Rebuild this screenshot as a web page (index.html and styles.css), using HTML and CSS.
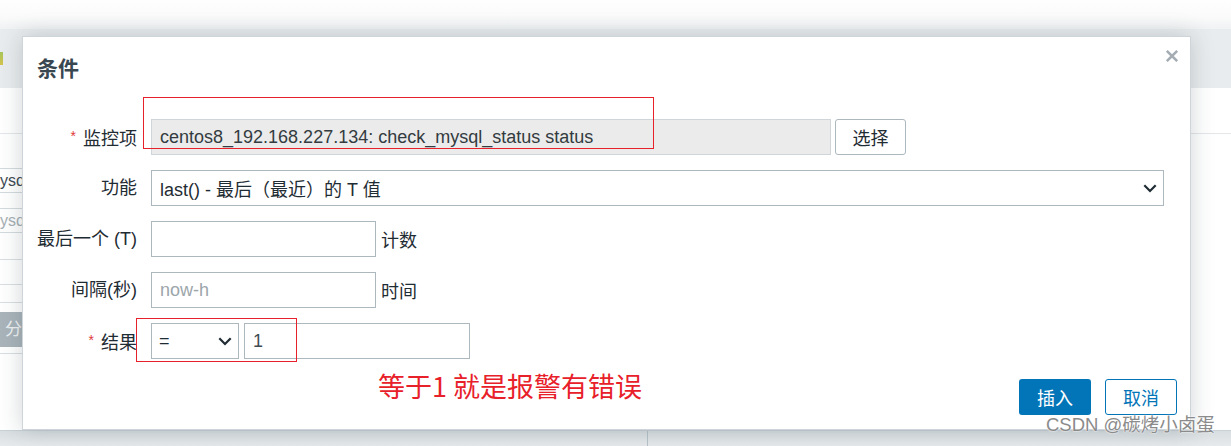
FILE: index.html
```html
<!DOCTYPE html>
<html lang="zh">
<head>
<meta charset="utf-8">
<title>条件</title>
<link rel="stylesheet" href="styles.css">
</head>
<body>
<div class="page">
  <div class="bg-top"></div>
  <div class="bg-header"><span class="bg-icon"></span></div>
  <div class="bg-body">
    <div class="bg-row"></div>
    <div class="bg-left">
      <div class="bg-field">ysq</div>
      <div class="bg-field bg-muted">ysq</div>
      <div class="bg-rule bg-rule-a"></div>
      <div class="bg-rule bg-rule-b"></div>
      <div class="bg-rule bg-rule-c"></div>
      <div class="bg-chip">分</div>
      <div class="bg-rule bg-rule-d"></div>
    </div>
  </div>
  <div class="bg-footer"><span class="bg-divider"></span></div>
</div>

<div class="dialog">
  <div class="dialog-head">
    <h2 class="dialog-title">条件</h2>
    <span class="close" aria-label="关闭">
      <svg width="14" height="14" viewBox="0 0 14 14"><path d="M1.8 1.8 L12.2 12.2 M12.2 1.8 L1.8 12.2" stroke="#a3adb3" stroke-width="2.6" fill="none"/></svg>
    </span>
  </div>
  <div class="form">
    <div class="label"><span class="req">*</span>监控项</div>
    <div class="field">
      <div class="input disabled w-item">centos8_192.168.227.134: check_mysql_status status</div>
      <span class="btn-select">选择</span>
    </div>

    <div class="label">功能</div>
    <div class="field">
      <div class="input select w-func">
        <span>last() - 最后（最近）的 T 值</span>
        <svg class="chev" width="14" height="9" viewBox="0 0 14 9"><path d="M1.3 1.3 L7 7 L12.7 1.3" stroke="#1f2c33" stroke-width="2.2" fill="none"/></svg>
      </div>
    </div>

    <div class="label">最后一个 (T)</div>
    <div class="field">
      <div class="input w-small"></div>
      <span class="suffix">计数</span>
    </div>

    <div class="label">间隔(秒)</div>
    <div class="field">
      <div class="input w-small placeholder">now-h</div>
      <span class="suffix">时间</span>
    </div>

    <div class="label"><span class="req">*</span>结果</div>
    <div class="field">
      <div class="input select w-op">
        <span>=</span>
        <svg class="chev" width="14" height="9" viewBox="0 0 14 9"><path d="M1.3 1.3 L7 7 L12.7 1.3" stroke="#1f2c33" stroke-width="2.2" fill="none"/></svg>
      </div>
      <div class="input w-value value">1</div>
    </div>
  </div>
  <div class="dialog-foot">
    <p class="note">等于1 就是报警有错误</p>
    <div class="actions">
      <span class="btn primary">插入</span>
      <span class="btn outline">取消</span>
    </div>
  </div>
</div>

<div class="mark mark-item"></div>
<div class="mark mark-result"></div>
<div class="watermark">CSDN @碳烤小卤蛋</div>
</body>
</html>
```

FILE: styles.css
```css
* { box-sizing: border-box; margin: 0; padding: 0; }
html, body { width: 1231px; height: 446px; overflow: hidden; }
body {
  position: relative;
  background: #fff;
  font-family: "Liberation Sans", "Noto Sans CJK SC", sans-serif;
  font-size: 18px;
  color: #1f2c33;
}

/* background page */
.page { display: flex; flex-direction: column; height: 446px; }
.bg-top { height: 29px; background: linear-gradient(#fefefe 0, #fbfbfb 55%, #f0f2f3 100%); }
.bg-header { height: 59px; background: #e9ecee; padding-top: 23px; }
.bg-icon { display: block; width: 3px; height: 13px; background: linear-gradient(#a7c75b, #d6c24e); }
.bg-body { flex: 1; display: flex; flex-direction: column; }
.bg-row { height: 46px; border-bottom: 1px solid #e3e7ea; }
.bg-left { width: 22px; display: flex; flex-direction: column; }
.bg-field {
  height: 25px; margin-top: 34px;
  border-top: 1px solid #d4dbdf; border-bottom: 1px solid #d4dbdf;
  white-space: nowrap; font-size: 16px;
  line-height: 23px; color: #3c4a52;
}
.bg-field.bg-muted { margin-top: 15px; color: #a7b0b5; }
.bg-rule { height: 1px; background: #d9dfe2; }
.bg-rule-a { margin-top: 26px; }
.bg-rule-b { margin-top: 24px; }
.bg-rule-c { margin-top: 17px; }
.bg-chip {
  height: 35px; margin-top: 9px; background: #a9b4ba; color: #eef1f2;
  white-space: nowrap; line-height: 35px; font-size: 17px; text-align: right;
}
.bg-rule-d { margin-top: 6px; }
.bg-footer {
  height: 16px; background: linear-gradient(#d8dee1, #e7eaec);
  border-top: 1px solid #c8d1d6; display: flex; padding-left: 647px;
}
.bg-divider { width: 1px; background: #b7c3c9; }

/* dialog */
.dialog {
  position: absolute; left: 22px; top: 36px;
  width: 1169px; height: 394px;
  background: #fff;
  border: 1px solid #cdd5da;
  box-shadow: 0 0 22px rgba(40, 60, 70, 0.22);
  display: flex; flex-direction: column;
}
.dialog-head { position: relative; padding: 20px 14px 0 14px; }
.dialog-title { font-size: 21px; line-height: 24px; font-weight: bold; color: #384750; }
.close { position: absolute; right: 11px; top: 12px; width: 14px; height: 14px; display: block; }
.close svg { display: block; }

.form {
  margin-top: 38px;
  display: grid;
  grid-template-columns: 114px 1fr;
  grid-auto-rows: 36px;
  column-gap: 14px;
  row-gap: 15px;
  align-items: center;
}
.label { text-align: right; white-space: nowrap; color: #1f2c33; line-height: 22px; }
.req { color: #e0393a; font-size: 14px; vertical-align: 4px; margin-right: 7px; }
.field { display: flex; align-items: center; height: 36px; }
.input {
  height: 36px;
  border: 1px solid #acb7be;
  background: #fff;
  padding: 0 8px;
  display: flex; align-items: center;
  white-space: nowrap; overflow: hidden;
  color: #1f2c33;
}
.input.disabled { background: #ebebeb; border-color: #cfd5d9; color: #333b40; }
.input.select { justify-content: space-between; padding-right: 6px; }
.chev { display: block; flex: none; }
.w-item { width: 680px; }
.w-func { width: 1013px; }
.w-small { width: 225px; }
.w-op { width: 88px; padding-left: 7px; }
.w-value { width: 226px; margin-left: 5px; }
.placeholder { color: #9ca6ab; }
.value { color: #3f4b52; }
.suffix { margin-left: 5px; color: #1f2c33; }
.btn-select {
  margin-left: 4px; width: 71px; height: 36px;
  border: 1px solid #acb7be; border-radius: 3px; background: #fff;
  display: flex; align-items: center; justify-content: center; color: #1f2c33;
}

.dialog-foot {
  margin-top: 11px;
  display: flex; justify-content: space-between; align-items: flex-start;
  padding-right: 13px;
}
.note {
  margin-left: 355px;
  font-family: "Noto Sans CJK SC", sans-serif;
  font-size: 27px; line-height: 32px;
  color: #e8202a;
}
.actions { display: flex; gap: 14px; margin-top: 9px; }
.btn {
  width: 72px; height: 36px; border-radius: 3px;
  display: flex; align-items: center; justify-content: center;
}
.btn.primary { background: #0275b8; color: #fff; }
.btn.outline { border: 1px solid #0275b8; color: #0275b8; background: #fff; }

/* annotations */
.mark { position: absolute; border: 1px solid #e8202a; }
.mark-item { left: 143px; top: 97px; width: 511px; height: 52px; }
.mark-result { left: 136px; top: 318px; width: 161px; height: 44px; }
.watermark {
  position: absolute; left: 1046px; top: 413px;
  font-size: 18.5px; line-height: 24px; white-space: nowrap;
  color: #8b8b8b;
  text-shadow: 0 0 2px #fff, 0 0 1px #fff;
}
```
